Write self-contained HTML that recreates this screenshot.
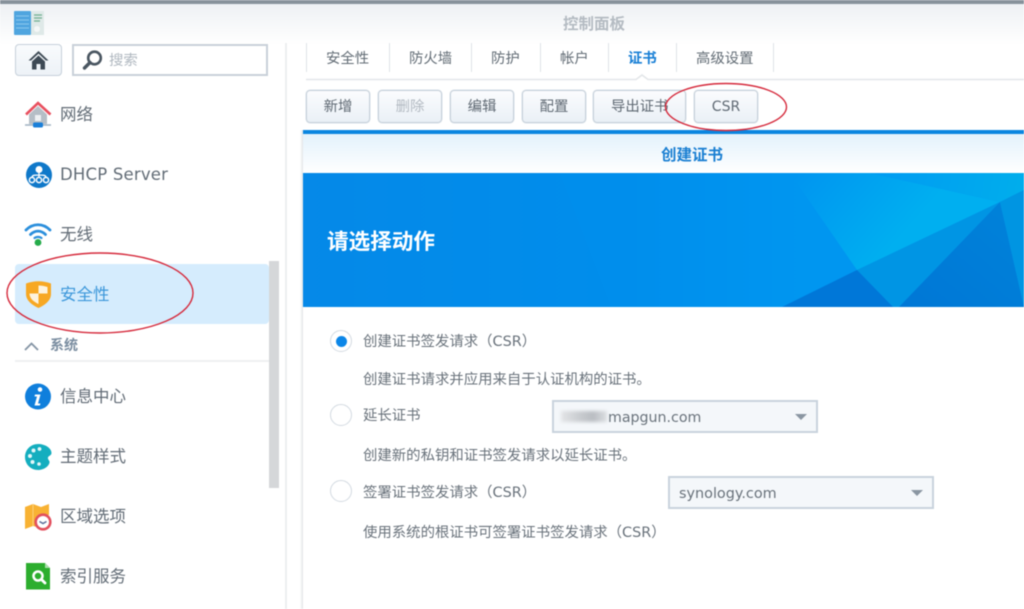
<!DOCTYPE html>
<html lang="zh-CN">
<head>
<meta charset="utf-8">
<title>控制面板</title>
<style>
*{box-sizing:border-box}
html,body{margin:0;padding:0;width:1024px;height:609px;overflow:hidden;background:#fff}
body{position:relative;font-family:"DejaVu Sans","Noto Sans CJK SC",sans-serif;color:#505a64}
#wrap{position:absolute;left:0;top:0;width:1024px;height:609px;overflow:hidden;filter:blur(.4px)}
.a{position:absolute;white-space:nowrap}
.nav{position:absolute;left:60px;font-size:16.5px;line-height:24px;color:#626c76;white-space:nowrap}
.tab{position:absolute;top:47px;height:24px;line-height:24px;font-size:14.4px;color:#626c75;white-space:nowrap}
.sep{position:absolute;top:43px;width:1px;height:29px;background:#dfe3e7}
.btn{position:absolute;top:90px;height:33px;border:1px solid #c6d0da;border-radius:4px;background:linear-gradient(#fbfcfe,#eaf0f6);font-size:14.4px;line-height:33px;text-align:center;color:#5f6973;white-space:nowrap;box-shadow:0 0 0 .5px #dce3ea}
.radio{position:absolute;left:330px;width:22px;height:22px;border-radius:50%;border:1.5px solid #d3dae1;background:#fff}
.t{position:absolute;left:363px;font-size:14.4px;line-height:20px;color:#69727b;white-space:nowrap}
.sel{position:absolute;height:33px;border:2px solid #c9d3dd;background:#f4f7fa;font-size:14.4px;line-height:33px;color:#69727b;white-space:nowrap}
.sel:after{content:"";position:absolute;right:9px;top:12px;border-left:6px solid transparent;border-right:6px solid transparent;border-top:6px solid #8a96a2}
svg{position:absolute;overflow:visible}
</style>
</head>
<body>
<div id="wrap">
  <!-- top bars -->
  <div class="a" style="left:0;top:0;width:1024px;height:4px;background:#87929b"></div>
  <div class="a" style="left:0;top:4px;width:1024px;height:40px;background:linear-gradient(#eef1f4,#fff)"></div>
  <svg style="left:14px;top:11px" width="30" height="24" viewBox="0 0 30 24">
    <rect x="0" y="0" width="17" height="24" rx="1" fill="#4fa5df"/>
    <rect x="17" y="0" width="13" height="24" fill="#dfe9e8"/>
    <path d="M2 5h13M2 9h13M2 13h13M2 17h13" stroke="#8cc8ef" stroke-width="1"/>
    <path d="M20 4h8M20 7h8M20 10h6" stroke="#6fae8f" stroke-width="1.3"/>
    <circle cx="23" cy="18" r="3" fill="#f4f7f7"/>
  </svg>
  <div class="a" style="left:563px;top:13px;font-size:15.5px;line-height:22px;font-weight:bold;color:#b4bbc2">控制面板</div>

  <!-- sidebar controls -->
  <div class="a" style="left:15px;top:44px;width:47px;height:32px;border:1px solid #c6d0da;border-radius:4px;background:linear-gradient(#f9fbfd,#edf2f7)"></div>
  <svg style="left:28px;top:50px" width="21" height="20" viewBox="0 0 21 20">
    <path d="M10.5 1L.5 10.5h2.6L10.5 3.6l7.4 6.9h2.6z" fill="#3e4a55"/>
    <path d="M4 11.5L10.5 5.5 17 11.5V19.500H12.500V14H8.500V19.500H4z" fill="#3e4a55"/>
  </svg>
  <div class="a" style="left:72px;top:44px;width:196px;height:32px;border:2px solid #c9d1d9;background:#fff"></div>
  <svg style="left:82px;top:49px" width="22" height="22" viewBox="0 0 22 22">
    <circle cx="12.500" cy="9" r="6.300" fill="none" stroke="#4a5661" stroke-width="2.600"/>
    <path d="M8 13.500L2.500 19" stroke="#4a5661" stroke-width="3.400" stroke-linecap="round"/>
  </svg>
  <div class="a" style="left:109px;top:51px;font-size:14.4px;line-height:20px;color:#b0b8c0">搜索</div>

  <!-- sidebar selection + scrollbar -->
  <div class="a" style="left:15px;top:264px;width:254px;height:60px;background:#d5ecfd;border-radius:4px"></div>
  <div class="a" style="left:269px;top:261px;width:10px;height:227px;background:#d5d7d9"></div>
  <div class="a" style="left:285px;top:43px;width:2px;height:566px;background:#eceef0"></div>

  <!-- icons -->
  <svg style="left:24px;top:100px" width="29" height="30" viewBox="0 0 29 30">
    <path d="M5 14.500V24H23V14.500L14 6z" fill="#b5bec6"/>
    <rect x="11" y="15" width="6" height="6" fill="#eef1f3"/>
    <path d="M2 14.500L14 3 26.500 14.500" fill="none" stroke="#e8505f" stroke-width="2.600"/>
    <path d="M1 25h26" stroke="#9fb2c2" stroke-width="1.600"/>
    <rect x="9" y="22.500" width="10" height="5" rx="1.500" fill="#1a7fd8"/>
  </svg>
  <svg style="left:26px;top:162px" width="26" height="26" viewBox="0 0 26 26">
    <circle cx="13" cy="13" r="13" fill="#0f78c9"/>
    <circle cx="13" cy="7.500" r="3.500" fill="#fff"/>
    <path d="M13 10v5M6 15.500C6 13 9 13 13 13s7 0 7 2.500M13 13v2" fill="none" stroke="#fff" stroke-width="1.300"/>
    <circle cx="6" cy="18" r="2.600" fill="none" stroke="#fff" stroke-width="1.500"/>
    <circle cx="13" cy="18" r="2.600" fill="none" stroke="#fff" stroke-width="1.500"/>
    <circle cx="20" cy="18" r="2.600" fill="none" stroke="#fff" stroke-width="1.500"/>
  </svg>
  <svg style="left:24px;top:222px" width="28" height="24" viewBox="0 0 28 24">
    <path d="M2 8C9 1 19 1 26 8" fill="none" stroke="#2b8fdc" stroke-width="2.800" stroke-linecap="round"/>
    <path d="M6.500 12.500C11 8 17 8 21.500 12.500" fill="none" stroke="#2b8fdc" stroke-width="2.800" stroke-linecap="round"/>
    <path d="M10.500 16C12.500 14.500 15.500 14.500 17.500 16" fill="none" stroke="#2b8fdc" stroke-width="2.200" stroke-linecap="round"/>
    <circle cx="14" cy="20.500" r="3.400" fill="#25ab4a"/>
  </svg>
  <svg style="left:25px;top:280px" width="27" height="28" viewBox="0 0 27 28">
    <path d="M1 3.500Q13.500 -1 26 3.500V14C26 21 19 25.500 13.500 28 8 25.500 1 21 1 14z" fill="#f7a823"/>
    <path d="M13.500 5.500C16.500 5.500 19.500 6 22.500 7V13.500H13.500zM13.500 13.500V24C9.500 22 4.500 19 4.500 13.500z" fill="#fdf3de"/>
  </svg>
  <svg style="left:24px;top:341px" width="15" height="10" viewBox="0 0 15 10">
    <path d="M1 9L7.500 2.500 14 9" fill="none" stroke="#8494a5" stroke-width="1.800"/>
  </svg>
  <div class="a" style="left:50px;top:336px;font-size:14px;line-height:20px;font-weight:bold;color:#7a8da0">系统</div>
  <div class="a" style="left:15px;top:360px;width:254px;height:2px;background:#eef0f2"></div>
  <svg style="left:25px;top:383px" width="26" height="27" viewBox="0 0 26 27">
    <circle cx="13" cy="13.500" r="13" fill="#0f7fdc"/>
    <circle cx="15" cy="6.500" r="2.300" fill="#fff"/>
    <path d="M10 11.500H15.500L13 20.500H15.500L14.800 22.500H9.500L12 13.500H9.500z" fill="#fff"/>
  </svg>
  <svg style="left:25px;top:444px" width="27" height="26" viewBox="0 0 27 26">
    <path d="M13 0C20 0 26.500 4 26.500 9c0 2.500-3 2.800-3.500 4.500-.5 1.500 1 2.500 1.500 4C25 21 20 26 13 26 5.500 26 0 20 0 13S5.500 0 13 0z" fill="#14aebf"/>
    <circle cx="8.500" cy="6.500" r="2" fill="#e4f7f9"/><circle cx="14.500" cy="5" r="1.900" fill="#e4f7f9"/>
    <circle cx="5" cy="12" r="2" fill="#e4f7f9"/><circle cx="7.500" cy="18" r="2" fill="#e4f7f9"/><circle cx="14" cy="20" r="1.800" fill="#e4f7f9"/>
  </svg>
  <svg style="left:25px;top:503px" width="27" height="28" viewBox="0 0 27 28">
    <path d="M0 4L8 1 16 4 24 1V12H17L12 17V24L8 23 0 26z" fill="#f8b233"/>
    <path d="M8 1V23" stroke="#fbcf7c" stroke-width="1"/>
    <circle cx="18" cy="19" r="7.300" fill="#fff" stroke="#e2505e" stroke-width="2.600"/>
    <path d="M14.500 18.500L18 20.500 21.500 18.500" fill="none" stroke="#5b6d9a" stroke-width="1.500"/>
  </svg>
  <svg style="left:26px;top:563px" width="25" height="27" viewBox="0 0 25 27">
    <path d="M0 0H19L24 5V26.500H0z" fill="#2cae2e"/>
    <path d="M19 0V5H24z" fill="#a9dfaa"/>
    <circle cx="12" cy="13" r="4.500" fill="none" stroke="#fff" stroke-width="2.500"/>
    <path d="M15.500 16.500L19 20" stroke="#fff" stroke-width="2.800" stroke-linecap="round"/>
  </svg>

  <div class="nav" style="top:103px">网络</div>
  <div class="nav" style="top:163px;font-size:16.500px;letter-spacing:.2px">DHCP Server</div>
  <div class="nav" style="top:223px">无线</div>
  <div class="nav" style="top:283px;color:#3c97da">安全性</div>
  <div class="nav" style="top:385px">信息中心</div>
  <div class="nav" style="top:445px">主题样式</div>
  <div class="nav" style="top:505px">区域选项</div>
  <div class="nav" style="top:565px">索引服务</div>

  <!-- tabs -->
  <div class="sep" style="left:306px"></div>
  <div class="tab" style="left:326px">安全性</div>
  <div class="sep" style="left:389px"></div>
  <div class="tab" style="left:409px">防火墙</div>
  <div class="sep" style="left:471px"></div>
  <div class="tab" style="left:491px">防护</div>
  <div class="sep" style="left:540px"></div>
  <div class="tab" style="left:560px">帐户</div>
  <div class="sep" style="left:608px"></div>
  <div class="tab" style="left:628px;color:#1a80d6;font-weight:bold">证书</div>
  <div class="sep" style="left:676px"></div>
  <div class="tab" style="left:696px">高级设置</div>
  <div class="sep" style="left:773px"></div>
  <svg style="left:306px;top:78px" width="718" height="6" viewBox="0 0 718 6">
    <path d="M0 1.500H330L336 -3 342 1.500H718" fill="none" stroke="#e3e6e9" stroke-width="1.600"/>
  </svg>

  <!-- buttons -->
  <div class="btn" style="left:306px;width:64px">新增</div>
  <div class="btn" style="left:378px;width:64px;color:#b3bac2">删除</div>
  <div class="btn" style="left:450px;width:64px">编辑</div>
  <div class="btn" style="left:522px;width:64px">配置</div>
  <div class="btn" style="left:593px;width:93px;text-align:left;padding-left:17px">导出证书</div>
  <div class="btn" style="left:694px;width:64px;font-size:14px">CSR</div>

  <!-- dialog -->
  <div class="a" style="left:300px;top:130px;width:3px;height:479px;background:linear-gradient(90deg,#fff,#e2e4e6)"></div>
  <div class="a" style="left:303px;top:130px;width:721px;height:4px;background:#0a86e0"></div>
  <div class="a" style="left:303px;top:134px;width:721px;height:39px;background:linear-gradient(#e3f2fc,#fff)"></div>
  <div class="a" style="left:661px;top:144px;font-size:15.500px;line-height:22px;font-weight:bold;color:#1a7fd2">创建证书</div>

  <svg style="left:303px;top:173px" width="721" height="134" viewBox="303 173 721 134" preserveAspectRatio="none">
    <defs>
      <linearGradient id="g0" gradientUnits="userSpaceOnUse" x1="303" y1="0" x2="640" y2="0"><stop offset="0" stop-color="#0589e8"/><stop offset="1" stop-color="#008eec"/></linearGradient>
      <linearGradient id="g4" gradientUnits="userSpaceOnUse" x1="620" y1="0" x2="800" y2="0"><stop offset="0" stop-color="#008eec"/><stop offset="1" stop-color="#0096f0"/></linearGradient>
      <linearGradient id="g1" gradientUnits="userSpaceOnUse" x1="790" y1="180" x2="880" y2="260"><stop offset="0" stop-color="#0095f0"/><stop offset="1" stop-color="#00aff0"/></linearGradient>
      <linearGradient id="g2" gradientUnits="userSpaceOnUse" x1="880" y1="173" x2="1024" y2="200"><stop offset="0" stop-color="#009cf2"/><stop offset="1" stop-color="#00aeec"/></linearGradient>
      <linearGradient id="g3" x1="0" x2="1" y1="1" y2="0"><stop offset="0" stop-color="#0077d6"/><stop offset="1" stop-color="#0083da"/></linearGradient>
    </defs>
    <rect x="303" y="173" width="721" height="134" fill="url(#g0)"/>
    <path d="M560 173L612 307H782L857 270 1000 202 870 173z" fill="url(#g4)"/>
    <path d="M790 173H870L1000 202 857 270z" fill="url(#g1)"/>
    <path d="M870 173H1024V190L1000 202z" fill="url(#g2)"/>
    <path d="M857 270L1000 202 899 307H893z" fill="#0095e4"/>
    <path d="M782 307L857 270 893 307z" fill="#0077d8"/>
    <path d="M899 307L1000 202 1024 307z" fill="url(#g3)"/>
    <path d="M1000 202L1024 190V307z" fill="#0095e2"/>
  </svg>
  <div class="a" style="left:327px;top:228px;font-size:21.600px;line-height:30px;font-weight:bold;color:#fff">请选择动作</div>

  <!-- form -->
  <div class="radio" style="top:330px"></div>
  <div class="a" style="left:335.500px;top:335.500px;width:11px;height:11px;border-radius:50%;background:#0b86e8"></div>
  <div class="t" style="top:332px">创建证书签发请求（CSR）</div>
  <div class="t" style="top:370px">创建证书请求并应用来自于认证机构的证书。</div>
  <div class="radio" style="top:404px"></div>
  <div class="t" style="top:406px">延长证书</div>
  <div class="sel" style="left:552px;top:400px;width:266px;padding-left:54px;font-size:14.2px">mapgun.com</div>
  <div class="a" style="left:561px;top:411px;width:46px;height:11px;background:linear-gradient(90deg,#e3e5e7,#c9ccd0 40%,#b9bdc2 70%,#dcdfe2);filter:blur(1.500px)"></div>
  <div class="t" style="top:446px">创建新的私钥和证书签发请求以延长证书。</div>
  <div class="radio" style="top:480px"></div>
  <div class="t" style="top:483px">签署证书签发请求（CSR）</div>
  <div class="sel" style="left:668px;top:476px;width:266px;padding-left:9px">synology.com</div>
  <div class="t" style="top:523px">使用系统的根证书可签署证书签发请求（CSR）</div>

  <!-- red annotation ellipses -->
  <svg style="left:0;top:0" width="1024" height="609" viewBox="0 0 1024 609">
    <ellipse cx="100" cy="293" rx="93" ry="40" fill="none" stroke="#d52a3c" stroke-width="1.400"/>
    <ellipse cx="726" cy="107" rx="60.500" ry="23.500" fill="none" stroke="#d52a3c" stroke-width="1.400"/>
  </svg>
</div>
</body>
</html>
